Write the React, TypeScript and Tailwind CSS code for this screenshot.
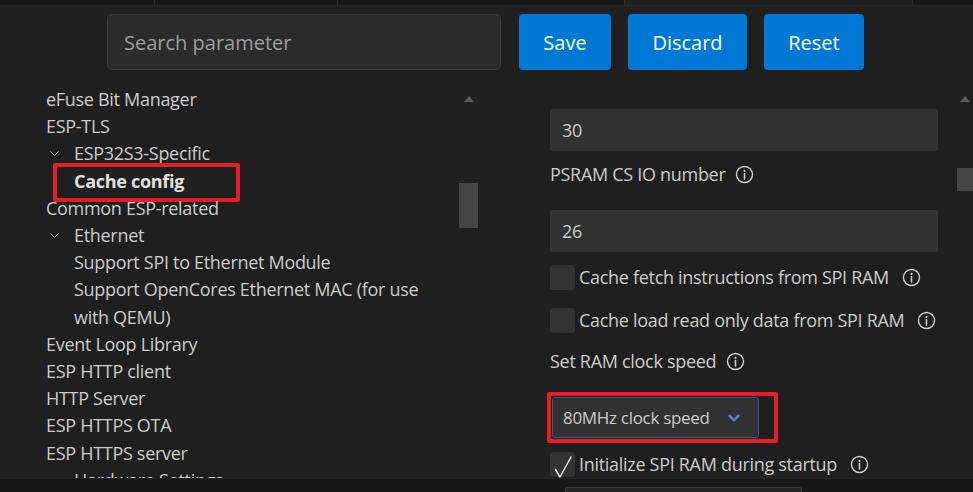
import { ChevronDown } from 'lucide-react';

const font = { fontFamily: '"Open Sans", "Noto Sans", sans-serif' };

function Info() {
  return (
    <svg width="19" height="19" viewBox="0 0 18 18" className="shrink-0">
      <circle cx="9" cy="9" r="7.6" fill="none" stroke="#d0d0d0" strokeWidth="1.3" />
      <circle cx="9" cy="5.6" r="1" fill="#d0d0d0" />
      <path d="M9 8v5.2" stroke="#d0d0d0" strokeWidth="1.5" strokeLinecap="round" />
    </svg>
  );
}

function Check() {
  return (
    <svg width="22" height="26" viewBox="0 0 22 26" className="absolute left-[2px] top-[2px]">
      <path d="M3.5 15.5l4.5 7.5L19 3" fill="none" stroke="#e6e6e6" strokeWidth="1.5" strokeLinecap="round" strokeLinejoin="round" />
    </svg>
  );
}

type Row = { label: string; level: 0 | 1; chevron?: boolean; bold?: boolean; marked?: boolean };

const rows: Row[] = [
  { label: 'eFuse Bit Manager', level: 0 },
  { label: 'ESP-TLS', level: 0 },
  { label: 'ESP32S3-Specific', level: 1, chevron: true },
  { label: 'Cache config', level: 1, bold: true, marked: true },
  { label: 'Common ESP-related', level: 0 },
  { label: 'Ethernet', level: 1, chevron: true },
  { label: 'Support SPI to Ethernet Module', level: 1 },
  { label: 'Support OpenCores Ethernet MAC (for use with QEMU)', level: 1 },
  { label: 'Event Loop Library', level: 0 },
  { label: 'ESP HTTP client', level: 0 },
  { label: 'HTTP Server', level: 0 },
  { label: 'ESP HTTPS OTA', level: 0 },
  { label: 'ESP HTTPS server', level: 0 },
  { label: 'Hardware Settings', level: 1, chevron: true },
];

function TreeRow({ row }: { row: Row }) {
  return (
    <div className="relative flex items-start leading-[27.2px]">
      {row.level === 1 && (
        <span className="w-[28px] h-[27px] shrink-0 flex items-center">
          {row.chevron && <ChevronDown size={15} strokeWidth={1.4} className="text-[#c8c8c8] ml-[1px]" />}
        </span>
      )}
      <span className={row.bold ? 'font-bold text-[#e0e0e0]' : 'text-[#cccccc]'}>{row.label}</span>
      {row.marked && (
        <span className="absolute left-[7px] top-[-5px] w-[187px] h-[39px] border-[4px] border-[#e81c26] rounded-[2px]" />
      )}
    </div>
  );
}

function Scrollbar({ thumbTop, thumbH, w }: { thumbTop: string; thumbH: string; w: string }) {
  return (
    <div className={`flex flex-col items-center pt-[26px] ${w}`}>
      <svg width="10" height="6" viewBox="0 0 10 6">
        <path d="M5 0L10 6H0z" fill="#5a5a5a" />
      </svg>
      <div className={`w-full bg-[#454545] ${thumbTop} ${thumbH}`} />
    </div>
  );
}

function Checkbox({ label, checked }: { label: string; checked?: boolean }) {
  return (
    <div className="flex items-center gap-[4px] h-[25px]">
      <span className="relative w-[25px] h-[25px] rounded-[4px] bg-[#333333] shrink-0">{checked && <Check />}</span>
      <span className="text-[#cccccc]">{label}</span>
      <span className="ml-[9px] flex"><Info /></span>
    </div>
  );
}

function Field({ value }: { value: string }) {
  return (
    <div className="w-[388px] h-[42px] bg-[#313131] rounded-[2px] flex items-center pl-[12px] text-[#cccccc]">{value}</div>
  );
}

export default function App() {
  return (
    <div className="w-[973px] h-[492px] bg-[#1f1f1f] overflow-hidden flex flex-col text-[18px] tracking-[-0.3px]" style={font}>
      <div className="h-[6px] flex shrink-0 border-b border-[#252525]">
        <div className="w-[155px] bg-[#181818] border-r border-[#2a2a2a]" />
        <div className="w-[183px] bg-[#181818] border-r border-[#2a2a2a]" />
        <div className="w-[287px] bg-[#181818] border-r border-[#2a2a2a]" />
        <div className="w-[288px] bg-[#1f1f1f] border-r border-[#2a2a2a]" />
        <div className="flex-1 bg-[#181818]" />
      </div>

      <div className="flex items-stretch h-[56px] mt-[8px] pl-[107px] shrink-0 tracking-normal">
        <div className="w-[394px] bg-[#2b2b2b] border border-[#3a3a3a] rounded-[5px] flex items-center pl-[16px] pt-[2px] text-[20px] text-[#9d9d9d]">
          Search parameter
        </div>
        <button className="ml-[18px] w-[92px] pt-[2px] bg-[#0078d4] rounded-[4px] text-white text-[20px]">Save</button>
        <button className="ml-[17px] w-[119px] pt-[2px] bg-[#0078d4] rounded-[4px] text-white text-[20px]">Discard</button>
        <button className="ml-[17px] w-[100px] pt-[2px] bg-[#0078d4] rounded-[4px] text-white text-[20px]">Reset</button>
      </div>

      <div className="flex flex-1 min-h-0">
        <div className="w-[480px] flex min-h-0">
          <div className="w-[436px] pl-[46px] pt-[16px] overflow-hidden shrink-0">
            {rows.map((r) => (
              <TreeRow key={r.label} row={r} />
            ))}
          </div>
          <div className="w-[23px]" />
          <Scrollbar thumbTop="mt-[81px]" thumbH="h-[45px]" w="w-[19px]" />
        </div>

        <div className="flex-1 flex min-h-0">
          <div className="flex-1 pl-[70px] pt-[39px] overflow-hidden">
            <Field value="30" />
            <div className="mt-[11px] h-[24px] flex items-center gap-[10px] text-[#cccccc]">
              PSRAM CS IO number <Info />
            </div>
            <div className="mt-[24px]">
              <Field value="26" />
            </div>
            <div className="mt-[13px]">
              <Checkbox label="Cache fetch instructions from SPI RAM" />
            </div>
            <div className="mt-[18px]">
              <Checkbox label="Cache load read only data from SPI RAM" />
            </div>
            <div className="mt-[16px] h-[24px] flex items-center gap-[10px] text-[#cccccc]">
              Set RAM clock speed <Info />
            </div>
            <div className="relative mt-[24px] ml-[2px] w-[207px]">
              <div className="w-[207px] h-[41px] bg-[#313131] border border-[#37598c] rounded-[3px] flex items-center pl-[10px] text-[17px] text-[#cccccc]">
                <span className="flex-1">80MHz clock speed</span>
                <ChevronDown size={18} strokeWidth={3.4} className="text-[#5276d6] mr-[15px]" />
              </div>
              <span className="absolute left-[-5px] top-[-5px] w-[231px] h-[51px] border-[4px] border-[#e81c26] rounded-[2px]" />
            </div>
            <div className="mt-[14px]">
              <Checkbox label="Initialize SPI RAM during startup" checked />
            </div>
          </div>
          <Scrollbar thumbTop="mt-[66px]" thumbH="h-[23px]" w="w-[16px]" />
        </div>
      </div>

      <div className="h-[14px] shrink-0 bg-[#181818] border-t border-[#242424] pl-[565px] pt-[8px]">
        <div className="w-[237px] h-full bg-[#262626] border border-b-0 border-[#3a3a3a] rounded-t-[3px]" />
      </div>
    </div>
  );
}
